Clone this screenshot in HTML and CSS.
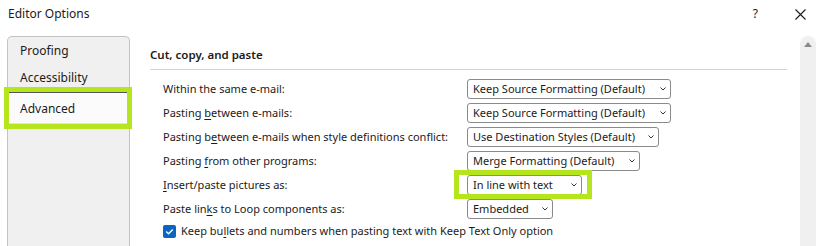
FILE: index.html
```html
<!DOCTYPE html>
<html>
<head>
<meta charset="utf-8">
<link rel="stylesheet" href="styles.css">
</head>
<body>
<div class="dialog">
  <div class="titlebar">
    <span class="title">Editor Options</span>
    <div class="title-actions">
      <span class="help">?</span>
      <svg class="close" width="11" height="11" viewBox="0 0 11 11"><path d="M0.5 0.5 L10.5 10.5 M10.5 0.5 L0.5 10.5" stroke="#1a1a1a" stroke-width="1.1" fill="none"/></svg>
    </div>
  </div>
  <div class="main">
    <nav class="nav">
      <div class="nav-item">Proofing</div>
      <div class="nav-item">Accessibility</div>
      <div class="nav-item selected">Advanced</div>
    </nav>
    <section class="content">
      <h2 class="section-title">Cut, copy, and paste</h2>
      <div class="rows">
        <div class="row">
          <span class="label">Within the same e-mail:</span>
          <div class="select w1"><span>Keep Source Formatting (Default)</span><svg class="chev" width="6" height="4" viewBox="0 0 6 4"><path d="M0.5 0.5 L3 3 L5.5 0.5" stroke="#333" fill="none"/></svg></div>
        </div>
        <div class="row">
          <span class="label">Pasting <u>b</u>etween e-mails:</span>
          <div class="select w1"><span>Keep Source Formatting (Default)</span><svg class="chev" width="6" height="4" viewBox="0 0 6 4"><path d="M0.5 0.5 L3 3 L5.5 0.5" stroke="#333" fill="none"/></svg></div>
        </div>
        <div class="row">
          <span class="label">Pasting b<u>e</u>tween e-mails when style definitions conflict:</span>
          <div class="select w2"><span>Use Destination Styles (Default)</span><svg class="chev" width="6" height="4" viewBox="0 0 6 4"><path d="M0.5 0.5 L3 3 L5.5 0.5" stroke="#333" fill="none"/></svg></div>
        </div>
        <div class="row">
          <span class="label">Pasting <u>f</u>rom other programs:</span>
          <div class="select w3"><span>Merge Formatting (Default)</span><svg class="chev" width="6" height="4" viewBox="0 0 6 4"><path d="M0.5 0.5 L3 3 L5.5 0.5" stroke="#333" fill="none"/></svg></div>
        </div>
        <div class="row">
          <span class="label"><u>I</u>nsert/paste pictures as:</span>
          <div class="highlight"><div class="select w4"><span>In line with text</span><svg class="chev" width="6" height="4" viewBox="0 0 6 4"><path d="M0.5 0.5 L3 3 L5.5 0.5" stroke="#333" fill="none"/></svg></div></div>
        </div>
        <div class="row">
          <span class="label">Paste lin<u>k</u>s to Loop components as:</span>
          <div class="select w5"><span>Embedded</span><svg class="chev" width="6" height="4" viewBox="0 0 6 4"><path d="M0.5 0.5 L3 3 L5.5 0.5" stroke="#333" fill="none"/></svg></div>
        </div>
        <div class="check-row">
          <span class="checkbox"><svg width="13" height="13" viewBox="0 0 13 13"><path d="M3.2 6.6 L5.5 8.8 L9.8 4.4" stroke="#fff" stroke-width="1.4" fill="none"/></svg></span>
          <span class="check-label">Keep bu<u>l</u>lets and numbers when pasting text with Keep Text Only option</span>
        </div>
      </div>
    </section>
    <div class="scrollbar"><span class="arrow"></span></div>
  </div>
</div>
</body>
</html>
```
FILE: styles.css
```css
*, *::before, *::after { box-sizing: border-box; }
html, body {
  margin: 0;
  padding: 0;
  background: #fff;
  width: 819px;
  height: 246px;
  overflow: hidden;
}
body {
  font-family: "Noto Sans", "Open Sans", sans-serif;
  font-size: 11px;
  color: #1b1b1b;
}
.dialog { width: 819px; height: 246px; display: flex; flex-direction: column; }
.titlebar {
  height: 36px;
  display: flex;
  align-items: flex-start;
  justify-content: space-between;
  padding: 5px 13px 0 8px;
}
.title { font-size: 12px; line-height: 17px; }
.title-actions { display: flex; align-items: center; gap: 37px; padding-top: 1px; }
.help { font-size: 12px; line-height: 15px; }
.close { display: block; margin-top: 2px; }
.main { flex: 1; display: flex; align-items: stretch; }
.nav {
  margin-left: 7px;
  width: 123px;
  background: #f0f0f0;
  border: 1px solid #c3c3c3;
  border-bottom: none;
  border-radius: 5px 5px 0 0;
  display: flex;
  flex-direction: column;
}
.nav-item {
  height: 27px;
  line-height: 27px;
  padding-left: 12px;
  font-size: 12px;
}
.nav-item.selected {
  position: relative;
  height: 32px;
  line-height: 31px;
  margin-top: 1px;
  background: #fbfbfb;
  border-top: 1px solid #555;
  border-bottom: 1px solid #e2e2e2;
}
.nav-item.selected::after {
  content: "";
  position: absolute;
  left: -4px;
  top: -6px;
  right: -3px;
  bottom: -6px;
  border: 5px solid #b5e51d;
}
.content {
  margin-left: 20px;
  width: 637px;
  display: flex;
  flex-direction: column;
}
.section-title {
  margin: 0;
  font-size: 11.5px;
  font-weight: 600;
  height: 34px;
  line-height: 38px;
  border-bottom: 1px solid #d4d4d4;
}
.rows {
  padding-left: 13px;
  padding-top: 9px;
  display: flex;
  flex-direction: column;
}
.row {
  height: 24px;
  display: grid;
  grid-template-columns: 304px auto;
  align-items: start;
  justify-content: start;
}
.label { line-height: 20px; }
u { text-decoration-thickness: 1px; text-underline-offset: 2px; }
.select {
  height: 20px;
  border: 1px solid #8a8a8a;
  border-radius: 3px;
  display: flex;
  align-items: center;
  justify-content: space-between;
  padding: 0 4px 0 5px;
  line-height: 18px;
  white-space: nowrap;
}
.chev { display: block; }
.w1 { width: 204px; }
.w2 { width: 192px; }
.w3 { width: 173px; }
.w4 { width: 115px; }
.w5 { width: 86px; }
.highlight { position: relative; justify-self: start; }
.highlight::before {
  content: "";
  position: absolute;
  left: -13px;
  top: -5px;
  width: 138px;
  height: 29px;
  border: 5px solid #b5e51d;
  pointer-events: none;
}
.check-row {
  display: flex;
  align-items: center;
  gap: 5px;
  height: 20px;
  margin-top: -2px;
}
.checkbox {
  width: 13px;
  height: 13px;
  border-radius: 2px;
  background: #0a64c2;
  display: flex;
}
.check-label { line-height: 20px; }
.scrollbar {
  margin-left: 13px;
  width: 16px;
  background: #f0f0f0;
  border-radius: 8px 8px 0 0;
  display: flex;
  justify-content: center;
  padding-top: 6px;
}
.arrow {
  width: 0;
  height: 0;
  border-left: 4px solid transparent;
  border-right: 4px solid transparent;
  border-bottom: 5px solid #8a8a8a;
}
```
